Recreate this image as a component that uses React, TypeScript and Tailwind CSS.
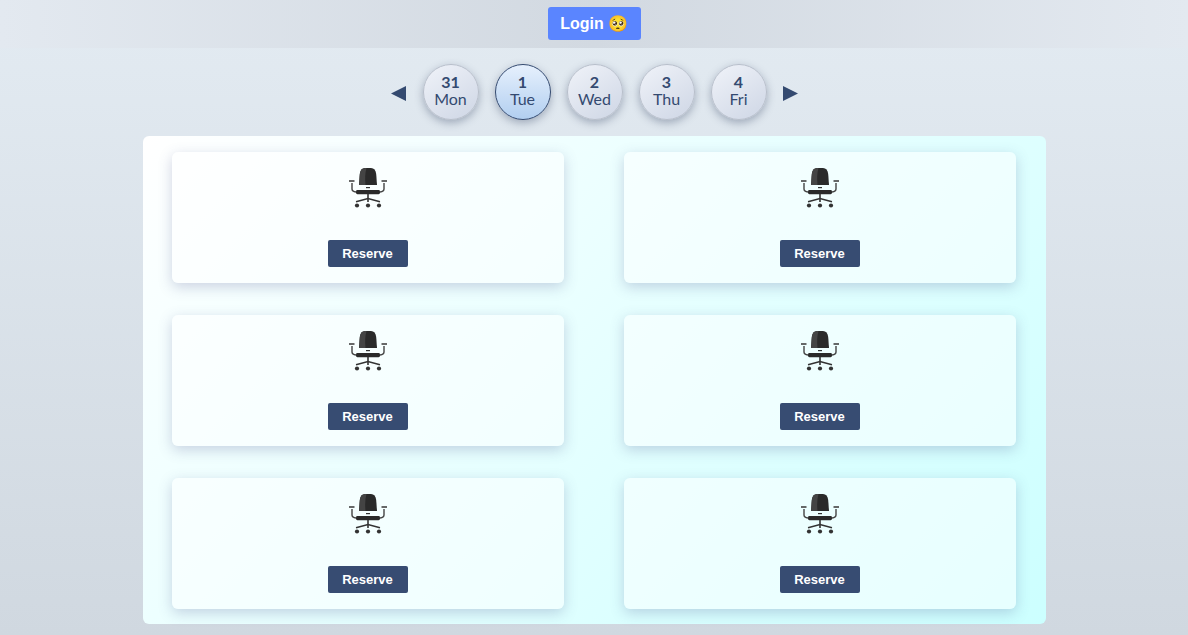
const days = [
  { num: '31', name: 'Mon' },
  { num: '1', name: 'Tue', active: true },
  { num: '2', name: 'Wed' },
  { num: '3', name: 'Thu' },
  { num: '4', name: 'Fri' },
];

const seats = [1, 2, 3, 4, 5, 6];

const Chair = () => (
  <svg width="38" height="42" viewBox="0 0 38 42" className="block">
    <path d="M10 18 L10.8 7 Q11.5 1 16 1 L22 1 Q26.5 1 27.2 7 L28 18 Z" fill="#2a2a2a" />
    <path d="M10 18 L10.8 7 Q11.5 1 16 1 L17.5 1 Q15.5 8 16.5 18 Z" fill="#444444" />
    <rect x="17" y="20" width="4" height="1.2" fill="#333333" />
    <rect x="0" y="13.2" width="5.5" height="1.6" fill="#444444" />
    <rect x="32.5" y="13.2" width="5.5" height="1.6" fill="#444444" />
    <path d="M3 16 L3 22 Q3 24.5 7 25" fill="none" stroke="#444444" strokeWidth="1.4" />
    <path d="M35 16 L35 22 Q35 24.5 31 25" fill="none" stroke="#444444" strokeWidth="1.4" />
    <rect x="7" y="23" width="24" height="4.2" rx="1.4" fill="#2a2a2a" />
    <path d="M19 27 L19 35" stroke="#333333" strokeWidth="1.6" />
    <path d="M7 34.8 L19 31.6 L31 34.8" fill="none" stroke="#333333" strokeWidth="1.6" />
    <circle cx="8" cy="38.5" r="2.1" fill="#333333" />
    <circle cx="19" cy="38.5" r="2.1" fill="#333333" />
    <circle cx="30" cy="38.5" r="2.1" fill="#333333" />
  </svg>
);

export default function App() {
  return (
    <div className="h-screen overflow-hidden bg-[linear-gradient(180deg,#e3ebf2,#d0d8e0)] font-['Lato',sans-serif]">
      <header className="h-12 flex justify-center pt-[7px] bg-[linear-gradient(90deg,#e3e9f0,#d2d9e1,#e3e9f0)]">
        <button className="w-[93px] h-[33px] rounded-[3px] bg-[#5a85ff] text-white text-base font-bold font-['Liberation_Sans',sans-serif] flex items-center justify-center gap-1">
          Login <span className="text-base font-normal">🥺</span>
        </button>
      </header>

      <nav className="flex justify-center items-center gap-4 mt-4 text-[#344a70]">
        <svg width="16" height="15" viewBox="0 0 16 15" className="mt-[2px]">
          <polygon points="15,0 15,15 0,7.5" fill="#344a70" />
        </svg>
        {days.map((day) => (
          <div
            key={day.num}
            className={`w-14 h-14 rounded-full flex flex-col items-center justify-center pb-[5px] text-base leading-[17px] shadow-[0_3px_8px_rgba(60,75,105,0.4)] border ${
              day.active
                ? 'border-[#344a70] bg-[linear-gradient(180deg,#e6f0fd,#b2cff0)]'
                : 'border-[#b8bfcb] bg-[linear-gradient(145deg,#f0f3f9,#ced6e5)]'
            }`}
          >
            <span className="font-bold">{day.num}</span>
            <span>{day.name}</span>
          </div>
        ))}
        <svg width="15" height="15" viewBox="0 0 15 15" className="mt-[2px]">
          <polygon points="0,0 0,15 15,7.5" fill="#344a70" />
        </svg>
      </nav>

      <main className="w-[903px] h-[488px] mx-auto mt-4 pt-4 pl-[29px] rounded-md bg-[linear-gradient(135deg,#ffffff,#ccffff)]">
        <div className="grid grid-cols-[392px_392px] gap-x-[60px] gap-y-8">
          {seats.map((seat) => (
            <div
              key={seat}
              className="h-[131px] rounded-md bg-white/50 shadow-[0_4px_14px_rgba(70,80,140,0.25)] flex flex-col items-center pt-[15px]"
            >
              <Chair />
              <button className="mt-[31px] w-20 h-[27px] rounded-[2px] bg-[#374c72] text-white text-[13px] font-bold font-['Liberation_Sans',sans-serif]">
                Reserve
              </button>
            </div>
          ))}
        </div>
      </main>
    </div>
  );
}
